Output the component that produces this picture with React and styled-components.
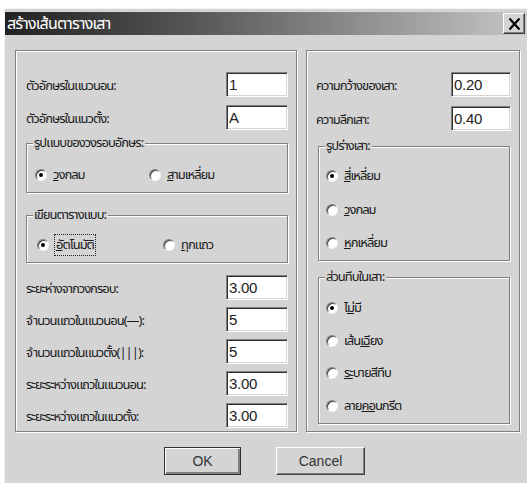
import React from 'react';
import styled, { createGlobalStyle } from 'styled-components';

const Global = createGlobalStyle`
  body {
    margin: 0;
    background: #fff;
    font-family: "Noto Sans Thai", "Noto Sans", "DejaVu Sans", sans-serif;
  }
`;

const Window = styled.div`
  margin: 8px 0 0 4px;
  width: 523px;
  height: 480px;
  box-sizing: border-box;
  background: #d4d4d4;
  border-top: 1px solid #f4f4f4;
  border-left: 1px solid #f4f4f4;
  padding: 3px 1px 0 0;
`;

const TitleBar = styled.div`
  height: 23px;
  display: flex;
  align-items: center;
  justify-content: space-between;
  padding: 0 1px 0 2px;
  background: linear-gradient(to right, #222 0%, #555 35%, #c6c6c6 100%);
`;

const Title = styled.span`
  color: #fff;
  font-size: 16px;
  line-height: 20px;
  letter-spacing: -0.8px;
`;

const CloseButton = styled.div`
  width: 22px;
  height: 21px;
  box-sizing: border-box;
  background: #d4d4d4;
  border: 1px solid;
  border-color: #fff #404040 #404040 #fff;
  box-shadow: inset -1px -1px 0 #808080;
  display: flex;
  align-items: center;
  justify-content: center;
`;

const Body = styled.div`
  padding: 15px 6px 0 10px;
`;

const Panels = styled.div`
  display: flex;
  gap: 9px;
`;

const Panel = styled.div`
  width: ${p => p.$w}px;
  height: 382px;
  box-sizing: border-box;
  border: 1px solid #808080;
  box-shadow: inset 1px 1px 0 #fff, 1px 1px 0 #fff;
  padding: ${p => p.$pad};
  display: flex;
  flex-direction: column;
`;

const Row = styled.div`
  display: flex;
  align-items: center;
  justify-content: space-between;
  height: 25px;
  margin-top: ${p => p.$mt || 0}px;
`;

const Label = styled.span`
  font-size: 13px;
  color: #1a1a1a;
  letter-spacing: -1px;
  padding-top: 3px;
`;

const Input = styled.div`
  width: ${p => p.$w}px;
  height: 25px;
  box-sizing: border-box;
  background: #fff;
  border: 1px solid;
  border-color: #808080 #fff #fff #808080;
  box-shadow: inset 1px 1px 0 #303030, inset -1px -1px 0 #d4d4d4;
  padding: 2px 2px;
  font-family: "Liberation Sans", Arial, sans-serif;
  font-size: 15px;
  line-height: 19px;
  letter-spacing: -0.3px;
  color: #222;
`;

const Group = styled.fieldset`
  margin: ${p => p.$mt}px ${p => p.$mr}px 0 ${p => p.$ml}px;
  padding: 0;
  height: ${p => p.$h}px;
  box-sizing: border-box;
  min-width: 0;
  border: 1px solid #808080;
  box-shadow: inset 1px 1px 0 #fff, 1px 1px 0 #fff;
`;

const Legend = styled.legend`
  margin-left: 6px;
  padding: 0 2px 0 1px;
  font-size: 13px;
  line-height: 16px;
  color: #1a1a1a;
  background: #d4d4d4;
  letter-spacing: -1px;
`;

const OptionGrid = styled.div`
  display: grid;
  grid-template-columns: ${p => p.$cols};
  padding: ${p => p.$pad};
`;

const OptionList = styled.div`
  display: flex;
  flex-direction: column;
  gap: ${p => p.$gap}px;
  padding: ${p => p.$pad};
`;

const Option = styled.label`
  display: flex;
  align-items: center;
  gap: 6px;
  height: 18px;
  font-size: 13px;
  color: #1a1a1a;
  letter-spacing: -1px;
`;

const Radio = styled.span`
  position: relative;
  width: 12px;
  height: 12px;
  box-sizing: border-box;
  flex: none;
  border-radius: 50%;
  background: #fff;
  border: 1px solid;
  border-color: #808080 #f4f4f4 #f4f4f4 #808080;
  box-shadow: inset 1px 1px 0 #404040;

  &::after {
    content: '';
    display: ${p => (p.$on ? 'block' : 'none')};
    position: absolute;
    left: 3px;
    top: 3px;
    width: 4px;
    height: 4px;
    border-radius: 50%;
    background: #000;
  }
`;

const Focus = styled.span`
  outline: 1px dotted #222;
  padding: 0 1px;
`;

const Buttons = styled.div`
  display: flex;
  justify-content: center;
  gap: 35px;
  margin-top: 15px;
  padding-right: 6px;
`;

const Button = styled.div`
  width: ${p => p.$w}px;
  height: 28px;
  box-sizing: border-box;
  border: 1px solid;
  border-color: ${p => (p.$default ? '#303030' : '#fff #404040 #404040 #fff')};
  box-shadow: ${p =>
    p.$default
      ? 'inset 1px 1px 0 #fff, inset -2px -2px 0 #808080'
      : 'inset -1px -1px 0 #808080'};
  display: flex;
  align-items: center;
  justify-content: center;
  font-family: "Liberation Sans", Arial, sans-serif;
  font-size: 14px;
  color: #333;
`;

const Choice = ({ on, children }) => (
  <Option>
    <Radio $on={on} />
    <span>{children}</span>
  </Option>
);

export default function App() {
  return (
    <>
      <Global />
      <Window>
        <TitleBar>
          <Title>สร้างเส้นตารางเสา</Title>
          <CloseButton>
            <svg width="13" height="12" viewBox="0 0 13 12">
              <path d="M1.5 0.5 L11.5 11.5 M11.5 0.5 L1.5 11.5" stroke="#000" strokeWidth="2.2" />
            </svg>
          </CloseButton>
        </TitleBar>

        <Body>
          <Panels>
            <Panel $w={282} $pad="21px 8px 0 10px">
              <Row>
                <Label>ตัวอักษรในแนวนอน:</Label>
                <Input $w={62}>1</Input>
              </Row>
              <Row $mt={8}>
                <Label>ตัวอักษรในแนวตั้ง:</Label>
                <Input $w={62}>A</Input>
              </Row>

              <Group $mt={5} $ml={0} $mr={0} $h={58}>
                <Legend>รูปแบบของวงรอบอักษร:</Legend>
                <OptionGrid $cols="114px 1fr" $pad="15px 0 0 8px">
                  <Choice on><u>ว</u>งกลม</Choice>
                  <Choice><u>ส</u>ามเหลี่ยม</Choice>
                </OptionGrid>
              </Group>

              <Group $mt={14} $ml={0} $mr={0} $h={56}>
                <Legend>เขียนตารางแบบ:</Legend>
                <OptionGrid $cols="126px 1fr" $pad="13px 0 0 10px">
                  <Choice on><Focus><u>อั</u>ตโนมัติ</Focus></Choice>
                  <Choice><u>ทุ</u>กแถว</Choice>
                </OptionGrid>
              </Group>

              <Row $mt={12}>
                <Label>ระยะห่างจากวงกรอบ:</Label>
                <Input $w={62}>3.00</Input>
              </Row>
              <Row $mt={7}>
                <Label>จำนวนแถวในแนวนอน(—):</Label>
                <Input $w={62}>5</Input>
              </Row>
              <Row $mt={7}>
                <Label>จำนวนแถวในแนวตั้ง(|||):</Label>
                <Input $w={62}>5</Input>
              </Row>
              <Row $mt={7}>
                <Label>ระยะระหว่างแถวในแนวนอน:</Label>
                <Input $w={62}>3.00</Input>
              </Row>
              <Row $mt={7}>
                <Label>ระยะระหว่างแถวในแนวตั้ง:</Label>
                <Input $w={62}>3.00</Input>
              </Row>
            </Panel>

            <Panel $w={214} $pad="21px 8px 0 9px">
              <Row>
                <Label>ความกว้างของเสา:</Label>
                <Input $w={60}>0.20</Input>
              </Row>
              <Row $mt={9}>
                <Label>ความลึกเสา:</Label>
                <Input $w={60}>0.40</Input>
              </Row>

              <Group $mt={7} $ml={2} $mr={1} $h={123}>
                <Legend>รูปร่างเสา:</Legend>
                <OptionList $gap={15.5} $pad="13px 0 0 7px">
                  <Choice on><u>สี่</u>เหลี่ยม</Choice>
                  <Choice><u>ว</u>งกลม</Choice>
                  <Choice><u>ห</u>กเหลี่ยม</Choice>
                </OptionList>
              </Group>

              <Group $mt={8} $ml={2} $mr={1} $h={155}>
                <Legend>ส่วนทึบในเสา:</Legend>
                <OptionList $gap={14.5} $pad="14px 0 0 7px">
                  <Choice on>ไ<u>ม่</u>มี</Choice>
                  <Choice>เส้น<u>เฉี</u>ยง</Choice>
                  <Choice><u>ระ</u>บายสีทึบ</Choice>
                  <Choice>ลาย<u>คอ</u>นกรีต</Choice>
                </OptionList>
              </Group>
            </Panel>
          </Panels>

          <Buttons>
            <Button $w={77} $default>OK</Button>
            <Button $w={89}>Cancel</Button>
          </Buttons>
        </Body>
      </Window>
    </>
  );
}
